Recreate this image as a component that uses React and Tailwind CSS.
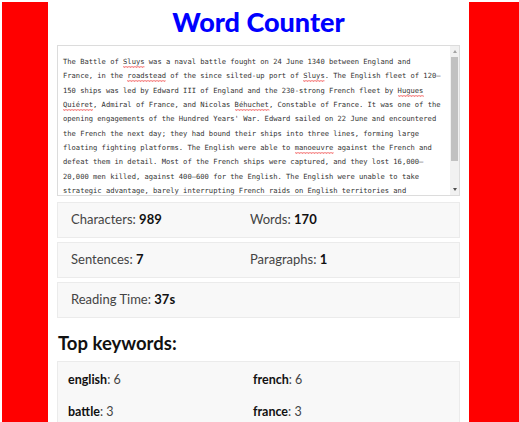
import React from 'react';

const lines = [
  [['The Battle of '], ['Sluys', true], [' was a naval battle fought on 24 June 1340 between England and']],
  [['France, in the '], ['roadstead', true], [' of the since silted-up port of '], ['Sluys', true], ['. The English fleet of 120–']],
  [['150 ships was led by Edward III of England and the 230-strong French fleet by '], ['Hugues', true]],
  [['Quiéret', true], [', Admiral of France, and Nicolas '], ['Béhuchet', true], [', Constable of France. It was one of the']],
  [["opening engagements of the Hundred Years' War. Edward sailed on 22 June and encountered"]],
  [['the French the next day; they had bound their ships into three lines, forming large']],
  [['floating fighting platforms. The English were able to '], ['manoeuvre', true], [' against the French and']],
  [['defeat them in detail. Most of the French ships were captured, and they lost 16,000–']],
  [['20,000 men killed, against 400–600 for the English. The English were unable to take']],
  [['strategic advantage, barely interrupting French raids on English territories and']],
];

// red squiggle under misspelled words, like the browser spell checker
function Misspelled({ children }) {
  return (
    <span className="relative">
      {children}
      <svg className="absolute left-0 top-[100%] w-full h-[2px] overflow-visible" preserveAspectRatio="none">
        <defs>
          <pattern id="squiggle" width="3" height="2" patternUnits="userSpaceOnUse">
            <path d="M0 1.6 L0.75 0.4 L1.5 1.6 L2.25 0.4 L3 1.6" stroke="#e33" strokeWidth="0.6" fill="none" />
          </pattern>
        </defs>
        <rect x="0" y="0" width="100%" height="2" fill="url(#squiggle)" />
      </svg>
    </span>
  );
}

function Stat({ label, value }) {
  return (
    <div>
      <span className="text-[#444]">{label}: </span>
      <span className="font-bold text-[#111]">{value}</span>
    </div>
  );
}

function Keyword({ word, count }) {
  return (
    <div className="h-[32px] flex items-center">
      <span className="font-bold text-[#111]">{word}</span>
      <span className="text-[#444]">: {count}</span>
    </div>
  );
}

export default function App() {
  return (
    <div className="h-[422px] overflow-hidden bg-white pt-[2px] pl-[2px] font-['Lato',sans-serif]">
      <div className="flex h-full">
        <div className="w-[46px] bg-[#ff0000] shrink-0" />
        <main className="w-[421px] bg-white px-[9px] shrink-0">
          <h1 className="text-center text-[27px] font-black text-[#0000ff] leading-none pt-[6px] h-[43px]">
            Word Counter
          </h1>

          <div className="relative h-[151px] border border-[#dcdcdc] bg-white overflow-hidden">
            <div className="pl-[5px] pt-[9px] pr-[12px] font-['DejaVu_Sans_Mono',monospace] text-[7.14px] leading-[14.33px] text-[#333] whitespace-pre">
              {lines.map((line, i) => (
                <div key={i} className="h-[14.33px]">
                  {line.map(([t, bad], j) =>
                    bad ? <Misspelled key={j}>{t}</Misspelled> : <span key={j}>{t}</span>
                  )}
                </div>
              ))}
            </div>
            <div className="absolute right-0 top-0 bottom-0 w-[9px] bg-[#f1f1f1] flex flex-col items-center">
              <div className="h-[11px] flex items-center justify-center">
                <div className="w-0 h-0 border-l-[2.5px] border-r-[2.5px] border-b-[3px] border-l-transparent border-r-transparent border-b-[#a3a3a3]" />
              </div>
              <div className="w-[7px] h-[104px] bg-[#c1c1c1]" />
              <div className="flex-1" />
              <div className="h-[11px] flex items-center justify-center">
                <div className="w-0 h-0 border-l-[2.5px] border-r-[2.5px] border-t-[3px] border-l-transparent border-r-transparent border-t-[#505050]" />
              </div>
            </div>
          </div>

          <div className="mt-[6px] flex flex-col gap-[4px] text-[13px]">
            <div className="h-[36px] bg-[#f8f8f8] border border-[#ebebeb] px-[13px] grid grid-cols-[179px_1fr] items-center">
              <Stat label="Characters" value="989" />
              <Stat label="Words" value="170" />
            </div>
            <div className="h-[36px] bg-[#f8f8f8] border border-[#ebebeb] px-[13px] grid grid-cols-[179px_1fr] items-center">
              <Stat label="Sentences" value="7" />
              <Stat label="Paragraphs" value="1" />
            </div>
            <div className="h-[36px] bg-[#f8f8f8] border border-[#ebebeb] px-[13px] flex items-center">
              <Stat label="Reading Time" value="37s" />
            </div>
          </div>

          <h2 className="mt-[16px] ml-[1px] text-[18.5px] font-bold text-[#111] leading-none h-[27px]">
            Top keywords:
          </h2>

          <div className="bg-[#f8f8f8] border border-[#ebebeb] pl-[10px] pt-[2px] pb-[40px] grid grid-cols-[185px_1fr] text-[12.5px]">
            <Keyword word="english" count="6" />
            <Keyword word="french" count="6" />
            <Keyword word="battle" count="3" />
            <Keyword word="france" count="3" />
          </div>
        </main>
        <div className="flex-1 bg-[#ff0000]" />
      </div>
    </div>
  );
}
